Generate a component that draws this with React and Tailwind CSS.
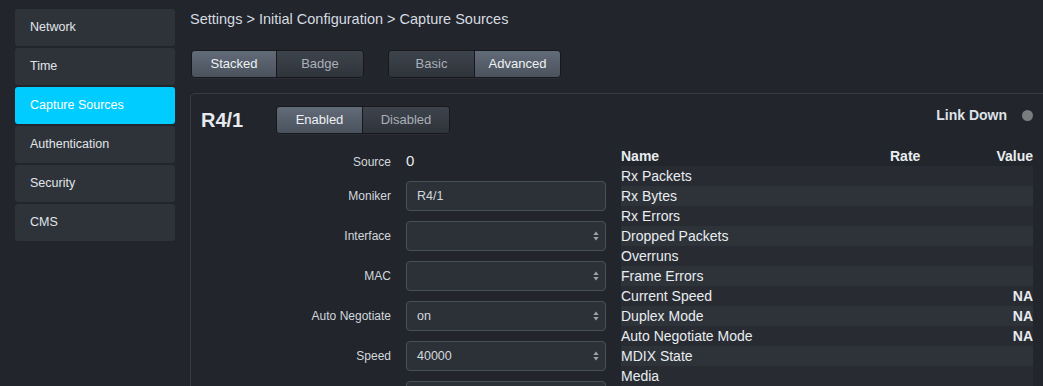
import React from 'react';

const font = { fontFamily: '"Liberation Sans", Arial, sans-serif' };

const navItems = ['Network', 'Time', 'Capture Sources', 'Authentication', 'Security', 'CMS'];

const stats = [
  ['Rx Packets', '', ''],
  ['Rx Bytes', '', ''],
  ['Rx Errors', '', ''],
  ['Dropped Packets', '', ''],
  ['Overruns', '', ''],
  ['Frame Errors', '', ''],
  ['Current Speed', '', 'NA'],
  ['Duplex Mode', '', 'NA'],
  ['Auto Negotiate Mode', '', 'NA'],
  ['MDIX State', '', ''],
  ['Media', '', ''],
];

function Segmented({ options, active, widths }) {
  return (
    <div className="flex h-[28px] rounded-[4px] border border-[#16181c] overflow-hidden shadow-[0_1px_0_rgba(255,255,255,0.04)]">
      {options.map((opt, i) => (
        <div
          key={opt}
          className={`flex items-center justify-center text-[13px] ${widths[i]} ${
            i > 0 ? 'border-l border-[#16181c]' : ''
          } ${
            opt === active
              ? 'bg-gradient-to-b from-[#626b78] to-[#4a525d] text-[#eef1f4]'
              : 'bg-gradient-to-b from-[#3e444c] to-[#2f343b] text-[#a9b0b9]'
          }`}
        >
          {opt}
        </div>
      ))}
    </div>
  );
}

function Chevrons() {
  return (
    <svg width="6" height="10" viewBox="0 0 6 10" className="shrink-0">
      <path d="M3 0.5 L5.6 4 H0.4 Z" fill="#9ca3ab" />
      <path d="M3 9.5 L5.6 6 H0.4 Z" fill="#9ca3ab" />
    </svg>
  );
}

function Field({ label, value, select }) {
  return (
    <div className="flex items-center gap-[15px]">
      <div className="w-[190px] text-right text-[12px] text-[#d3d8de]">{label}</div>
      <div className="w-[200px] h-[30px] rounded-[4px] border border-[#4a5058] bg-[#2c3137] flex items-center justify-between pl-[10px] pr-[6px] text-[12.5px] text-[#d3d8de]">
        <span>{value}</span>
        {select && <Chevrons />}
      </div>
    </div>
  );
}

export default function App() {
  return (
    <div style={font} className="w-[1043px] h-[386px] overflow-hidden bg-[#22252b] flex">
      <div className="w-[190px] shrink-0 pl-[15px] pt-[9px] flex flex-col gap-[2px]">
        {navItems.map((item) => (
          <div
            key={item}
            className={`w-[160px] h-[37px] rounded-[3px] flex items-center pl-[15px] text-[12.5px] ${
              item === 'Capture Sources' ? 'bg-[#00ccff] text-white' : 'bg-[#2e333a] text-[#e1e5e9]'
            }`}
          >
            {item}
          </div>
        ))}
      </div>

      <div className="flex-1 min-w-0 pt-[9px]">
        <div className="h-[20px] leading-[20px] text-[14.5px] text-[#d6dbe1]">
          Settings &gt; Initial Configuration &gt; Capture Sources
        </div>

        <div className="mt-[21px] ml-[1px] flex gap-[24px]">
          <Segmented options={['Stacked', 'Badge']} active="Stacked" widths={['w-[84px]', 'w-[87px]']} />
          <Segmented options={['Basic', 'Advanced']} active="Advanced" widths={['w-[85px]', 'w-[86px]']} />
        </div>

        <div className="mt-[15px] w-[870px] h-[320px] rounded-[5px] border border-[#373b42] bg-[#22252b] pl-[10px] pt-[12px]">
          <div className="flex items-center h-[28px] w-[832px]">
            <div className="w-[75px] text-[20px] font-bold text-[#e6eaee]">R4/1</div>
            <Segmented options={['Enabled', 'Disabled']} active="Enabled" widths={['w-[85px]', 'w-[87px]']} />
            <div className="ml-auto flex items-center gap-[15px] -mt-[10px]">
              <span className="text-[14px] font-bold text-[#dde2e7]">Link Down</span>
              <span className="w-[11px] h-[11px] rounded-full bg-[#7b7c7e]" />
            </div>
          </div>

          <div className="mt-[12px] flex gap-[15px]">
            <div className="flex flex-col">
              <div className="h-[31px] flex items-center gap-[15px]">
                <div className="w-[190px] text-right text-[12px] text-[#d3d8de]">Source</div>
                <div className="text-[15px] text-[#e6eaee]">0</div>
              </div>
              <div className="mt-[4px] flex flex-col gap-[10px]">
                <Field label="Moniker" value="R4/1" />
                <Field label="Interface" value="" select />
                <Field label="MAC" value="" select />
                <Field label="Auto Negotiate" value="on" select />
                <Field label="Speed" value="40000" select />
                <Field label="" value="" select />
              </div>
            </div>

            <div className="w-[412px] text-[14px] text-[#e9edf1]">
              <div className="grid grid-cols-[269px_1fr_auto] h-[20px] items-center font-bold">
                <span>Name</span>
                <span>Rate</span>
                <span className="text-right">Value</span>
              </div>
              {stats.map(([name, rate, value], i) => (
                <div
                  key={name}
                  className={`grid grid-cols-[269px_1fr_auto] h-[20px] items-center ${
                    i % 2 === 0 ? 'bg-[#282c32]' : 'bg-[#2e3339]'
                  }`}
                >
                  <span>{name}</span>
                  <span>{rate}</span>
                  <span className="text-right font-bold">{value}</span>
                </div>
              ))}
            </div>
          </div>
        </div>
      </div>
    </div>
  );
}
